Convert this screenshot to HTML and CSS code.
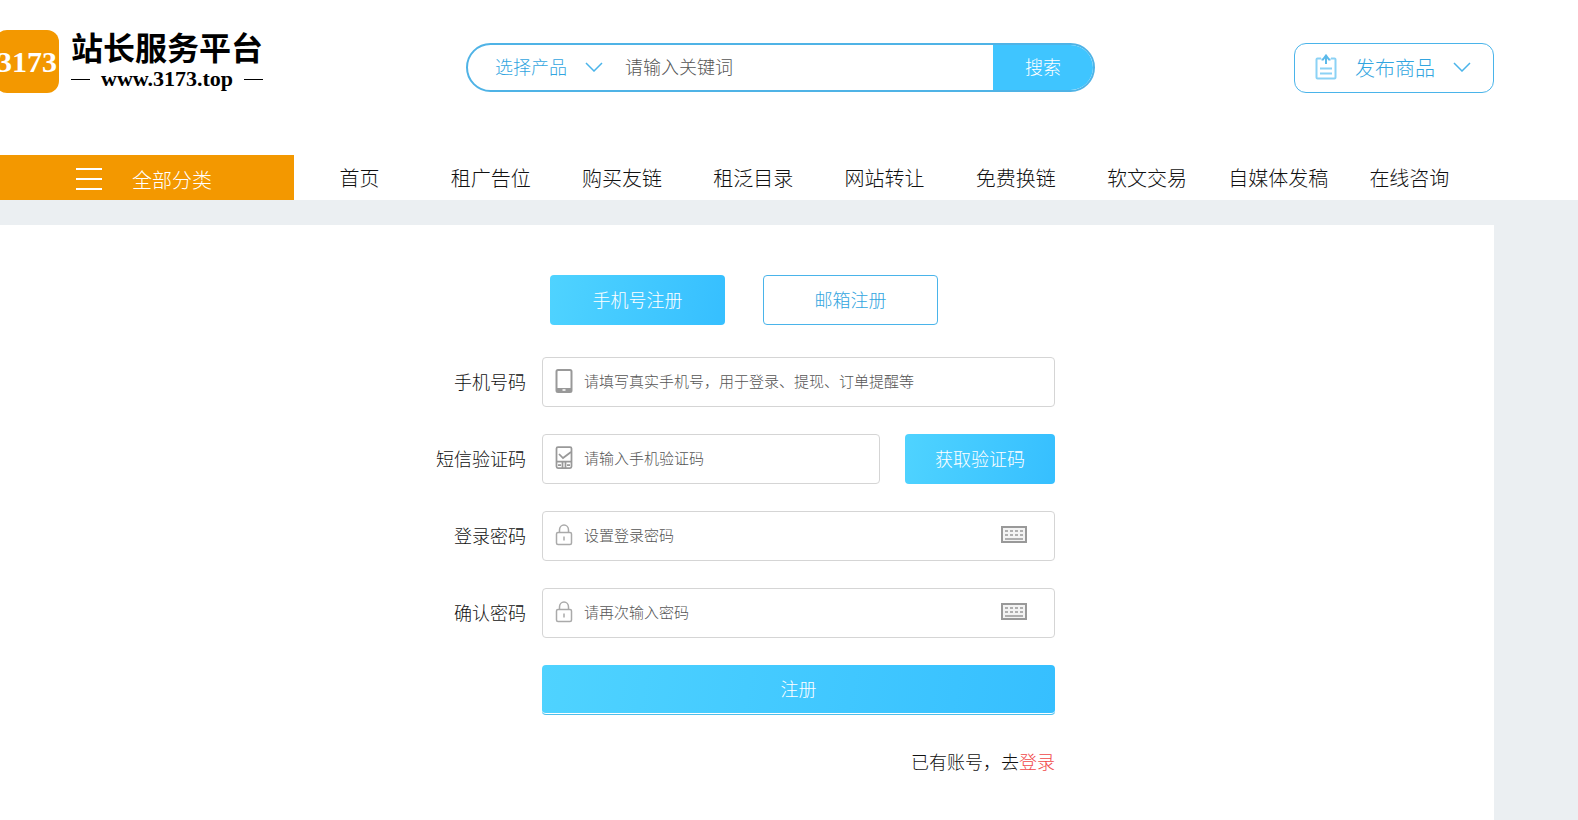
FILE: index.html
```html
<!DOCTYPE html>
<html lang="zh-CN">
<head>
  <meta charset="UTF-8">
  <meta name="viewport" content="width=device-width, initial-scale=1.0">
  <title>站长服务平台</title>
  <link rel="stylesheet" href="styles.css">
</head>
<body>
  <header class="header">
    <div class="wrap header-top">
      <a class="logo" href="#">
        <span class="logo-mark">3173</span>
        <span class="logo-text">
          <span class="logo-name">站长服务平台</span>
          <span class="logo-url">www.3173.top</span>
        </span>
      </a>

      <form class="search">
        <div class="search-type">
          <select aria-label="选择产品">
            <option>选择产品</option>
          </select>
          <svg class="arrow" width="18" height="10" viewBox="0 0 18 10"><path d="M1 1l8 8 8-8"/></svg>
        </div>
        <input class="search-input" type="text" aria-label="请输入关键词" placeholder="请输入关键词">
        <button class="search-btn" type="submit">搜索</button>
      </form>

      <button class="publish" type="button">
        <svg class="publish-icon" width="22" height="26" viewBox="0 0 22 26">
          <path class="sheet" d="M6 4.500H2.500a1 1 0 0 0-1 1v18a1 1 0 0 0 1 1h17a1 1 0 0 0 1-1v-18a1 1 0 0 0-1-1H16"/>
          <path d="M11 10V2M6.500 5.500h1.500l3-4 3 4h1.500"/>
          <path class="sheet" d="M5 14.500h12M5 19.500h12"/>
        </svg>
        <span>发布商品</span>
        <svg class="arrow" width="18" height="10" viewBox="0 0 18 10"><path d="M1 1l8 8 8-8"/></svg>
      </button>
    </div>

    <nav class="wrap nav">
      <a class="nav-all" href="#">
        <svg width="26" height="22" viewBox="0 0 26 22"><path d="M0 1h26M0 11h26M0 21h26"/></svg>
        <span>全部分类</span>
      </a>
      <div class="nav-list">
        <a href="#">首页</a>
        <a href="#">租广告位</a>
        <a href="#">购买友链</a>
        <a href="#">租泛目录</a>
        <a href="#">网站转让</a>
        <a href="#">免费换链</a>
        <a href="#">软文交易</a>
        <a href="#">自媒体发稿</a>
        <a href="#">在线咨询</a>
      </div>
    </nav>
  </header>

  <main class="wrap card">
    <div class="tabs">
      <button class="tab active" type="button">手机号注册</button>
      <button class="tab" type="button">邮箱注册</button>
    </div>

    <form class="form">
      <div class="row">
        <label for="mobile">手机号码</label>
        <div class="field">
          <svg class="icon" width="18" height="24" viewBox="0 0 18 24">
            <rect x="1.500" y="1" width="15" height="22" rx="1.500"/>
            <path class="solid" d="M1 19h16v4H1z"/>
            <path class="light" d="M7.500 21h3"/>
          </svg>
          <input type="tel" id="mobile" placeholder="请填写真实手机号，用于登录、提现、订单提醒等">
        </div>
      </div>

      <div class="row">
        <label for="code">短信验证码</label>
        <div class="field">
          <svg class="icon code" width="18" height="24" viewBox="0 0 18 24">
            <rect x="1.500" y="1" width="15" height="21" rx="1.500"/>
            <path d="M4 8l4 4 8-6M1 15.500h16M3 19h3M12 19h3M7.500 16v6M10.500 16v6"/>
          </svg>
          <input type="text" id="code" placeholder="请输入手机验证码">
        </div>
        <button class="code-btn" type="button">获取验证码</button>
      </div>

      <div class="row">
        <label for="password">登录密码</label>
        <div class="field">
          <svg class="icon lock" width="18" height="24" viewBox="0 0 18 24">
            <rect x="1.500" y="9.500" width="15" height="12" rx="1.500"/>
            <path d="M4.500 9.500V7a4.500 5 0 0 1 9 0v2.500M9 13.500v4"/>
          </svg>
          <input type="password" id="password" placeholder="设置登录密码">
          <svg class="keyboard" width="26" height="18" viewBox="0 0 26 18">
            <rect x="1" y="1" width="24" height="15"/>
            <path class="keys" d="M4 5h18M4 9h18"/>
            <path class="bar" d="M4 13h18"/>
          </svg>
        </div>
      </div>

      <div class="row">
        <label for="confirm">确认密码</label>
        <div class="field">
          <svg class="icon lock" width="18" height="24" viewBox="0 0 18 24">
            <rect x="1.500" y="9.500" width="15" height="12" rx="1.500"/>
            <path d="M4.500 9.500V7a4.500 5 0 0 1 9 0v2.500M9 13.500v4"/>
          </svg>
          <input type="password" id="confirm" placeholder="请再次输入密码">
          <svg class="keyboard" width="26" height="18" viewBox="0 0 26 18">
            <rect x="1" y="1" width="24" height="15"/>
            <path class="keys" d="M4 5h18M4 9h18"/>
            <path class="bar" d="M4 13h18"/>
          </svg>
        </div>
      </div>

      <div class="form-foot">
        <button class="submit-btn" type="submit">注册</button>
        <p class="login-tip">已有账号，去<a href="#">登录</a></p>
      </div>
    </form>
  </main>
</body>
</html>
```

FILE: styles.css
```css
* {
  box-sizing: border-box;
}

body {
  margin: 0;
  min-height: 100vh;
  display: flex;
  flex-direction: column;
  background-color: #ebeff2;
  color: #111;
  font-family: "Noto Sans CJK SC", sans-serif;
  font-size: 18px;
  font-weight: 300;
}

button,
input,
select {
  font: inherit;
  color: inherit;
}

button {
  padding: 0 0 3px;
  cursor: pointer;
}

input {
  border: none;
  outline: none;
  background: none;
  padding: 0 0 3px;
  min-width: 0;
}

input::placeholder {
  color: #555;
  opacity: 1;
}

a {
  color: inherit;
  text-decoration: none;
}

svg {
  display: block;
  flex: none;
  fill: none;
}

.wrap {
  margin-right: 84px;
}

/* header */
.header {
  background-color: #fff;
}

.header-top {
  display: flex;
  justify-content: space-between;
  align-items: flex-start;
  height: 155px;
  padding-top: 30px;
}

.logo {
  display: flex;
  gap: 12px;
  margin-left: -5px;
  padding-right: 4px;
  color: #000;
}

.logo-mark {
  width: 64px;
  height: 63px;
  line-height: 63px;
  border-radius: 12px;
  background-color: #f39800;
  color: #fff;
  font-family: "Liberation Serif", serif;
  font-size: 30px;
  font-weight: bold;
  text-align: center;
}

.logo-name {
  display: block;
  font-size: 32px;
  line-height: 36px;
  font-weight: bold;
}

.logo-text {
  margin-top: -2px;
}

.logo-url {
  display: flex;
  align-items: center;
  justify-content: space-between;
  margin-top: 4px;
  font-family: "Liberation Serif", serif;
  font-size: 22px;
  line-height: 22px;
  font-weight: bold;
}

.logo-url::before,
.logo-url::after {
  content: "";
  width: 19px;
  height: 1px;
  background-color: #000;
}

.arrow {
  stroke: #4ab4ea;
  stroke-width: 1.5;
}

.search {
  display: flex;
  width: 629px;
  height: 49px;
  margin-top: 13px;
  border: 2px solid #4fb3e6;
  border-radius: 25px;
  overflow: hidden;
}

.search-type {
  position: relative;
  margin-left: 27px;
  color: #32a5e0;
}

.search-type select {
  width: 108px;
  height: 100%;
  border: none;
  outline: none;
  background: none;
  appearance: none;
  padding: 0 0 3px;
}

.search-type .arrow {
  position: absolute;
  right: 0;
  top: 17px;
  pointer-events: none;
}

.search-input {
  flex: 1;
  padding-left: 22px;
}

.search-btn {
  width: 100px;
  border: none;
  background-color: #3fc5ff;
  color: #fff;
}

.publish {
  display: flex;
  align-items: center;
  justify-content: space-between;
  width: 200px;
  height: 50px;
  margin-top: 13px;
  padding: 0 22px 2px 20px;
  border: 1px solid #4ab4ea;
  border-radius: 12px;
  background: none;
  color: #32a5e0;
  font-size: 20px;
}

.publish-icon {
  stroke: #5bb9ea;
  stroke-width: 2;
}

.publish-icon .sheet {
  stroke: #8bd2f5;
}

/* nav */
.nav {
  display: flex;
  height: 45px;
  line-height: 45px;
  font-size: 20px;
}

.nav-all {
  display: flex;
  align-items: center;
  gap: 30px;
  width: 294px;
  padding: 3px 0 0 76px;
  background-color: #f39800;
  color: #fff;
}

.nav-all svg {
  stroke: #fff;
  stroke-width: 2;
}

.nav-list {
  flex: 1;
  display: grid;
  grid-template-columns: repeat(9, 1fr);
  padding-right: 19px;
  text-align: center;
  white-space: nowrap;
}

/* register card */
.card {
  flex: 1;
  margin-top: 25px;
  padding: 50px 6px 40px 0;
  background-color: #fff;
}

.tabs {
  display: flex;
  justify-content: center;
  gap: 38px;
  margin-bottom: 32px;
}

.tab {
  width: 175px;
  height: 50px;
  border: 1px solid #4ab4ea;
  border-radius: 4px;
  background-color: #fff;
  color: #32a5e0;
}

.tab.active,
.code-btn,
.submit-btn {
  border: none;
  border-radius: 4px;
  background: linear-gradient(100deg, #4fd3ff, #36bfff);
  color: #fff;
}

.form {
  width: 622px;
  margin: 0 auto;
}

.row {
  display: flex;
  align-items: center;
  margin-bottom: 27px;
}

.row label {
  width: 109px;
  padding: 0 16px 2px 0;
  text-align: right;
  white-space: nowrap;
}

.field {
  flex: 1;
  display: flex;
  align-items: center;
  height: 50px;
  padding: 0 27px 2px 12px;
  border: 1px solid #d5d5d5;
  border-radius: 4px;
}

.field input {
  flex: 1;
  height: 46px;
  padding-bottom: 1px;
  margin-left: 11px;
  font-size: 15px;
}

.icon {
  stroke: #999;
  stroke-width: 2;
}

.icon .solid {
  fill: #999;
  stroke: none;
}

.icon .light {
  stroke: #fff;
  stroke-width: 1.5;
}

.icon.code {
  stroke-width: 1.75;
}

.lock {
  stroke: #aaa;
  stroke-width: 1.5;
}

.keyboard {
  stroke: #999;
  stroke-width: 2;
}

.keyboard rect {
  fill: #f3f3f3;
}

.keyboard .keys {
  stroke-width: 1.5;
  stroke-dasharray: 3 2;
}

.keyboard .bar {
  stroke-width: 1.5;
}

.code-btn {
  width: 150px;
  height: 50px;
  margin-left: 25px;
}

.form-foot {
  margin-left: 109px;
}

.submit-btn {
  width: 100%;
  height: 50px;
  border-bottom: 1px solid #4fbfea;
  box-shadow: inset 0 -1px #fff;
}

.login-tip {
  margin: 32px 0 0;
  line-height: 28px;
  text-align: right;
}

.login-tip a {
  color: #f04848;
}
```
